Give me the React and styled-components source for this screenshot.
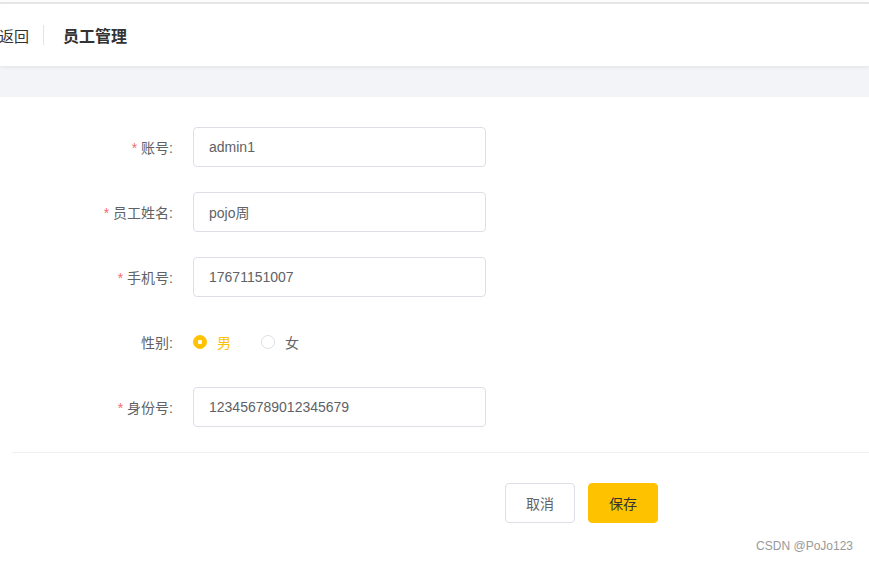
import styled, { createGlobalStyle } from "styled-components";

const GlobalStyle = createGlobalStyle`
  body {
    margin: 0;
    background: #fff;
    font-family: "Liberation Sans", "Noto Sans CJK SC", sans-serif;
  }
`;

export default function App() {
  const fields = [
    { label: "账号", value: "admin1", required: true },
    { label: "员工姓名", value: "pojo周", required: true },
    { label: "手机号", value: "17671151007", required: true },
    { label: "性别", type: "radio" },
    { label: "身份号", value: "123456789012345679", required: true },
  ];

  return (
    <Page>
      <GlobalStyle />
      <Header>
        <Back>返回</Back>
        <Divider />
        <Title>员工管理</Title>
      </Header>
      <Band />
      <FormArea>
        {fields.map((f) => (
          <Row key={f.label}>
            <Label>
              {f.required && <Star>*</Star>}
              {f.label}:
            </Label>
            {f.type === "radio" ? (
              <RadioGroup>
                <RadioItem $checked>
                  <RadioDot $checked />男
                </RadioItem>
                <RadioItem>
                  <RadioDot />女
                </RadioItem>
              </RadioGroup>
            ) : (
              <Input value={f.value} readOnly />
            )}
          </Row>
        ))}
        <Line />
        <Footer>
          <Button>取消</Button>
          <Button $primary>保存</Button>
        </Footer>
      </FormArea>
      <Watermark>CSDN @PoJo123</Watermark>
    </Page>
  );
}

const Page = styled.div`
  position: relative;
  width: 869px;
  height: 561px;
  padding-top: 2px;
  box-sizing: border-box;
  overflow: hidden;
`;

const Header = styled.header`
  display: flex;
  align-items: center;
  height: 62px;
  border-top: 2px solid #e6e6e6;
  box-shadow: 0 1px 4px rgba(0, 0, 0, 0.08);
  position: relative;
  z-index: 1;
`;

const Back = styled.span`
  font-size: 15px;
  color: #333;
  margin-left: -1px;
`;

const Divider = styled.span`
  width: 1px;
  height: 20px;
  background: #e4e4e4;
  margin: 0 19px 0 14px;
`;

const Title = styled.h1`
  margin: 0;
  font-size: 16px;
  font-weight: bold;
  color: #333;
`;

const Band = styled.div`
  height: 31px;
  background: #f3f4f7;
`;

const FormArea = styled.div`
  padding: 30px 0 0 12px;
`;

const Row = styled.div`
  display: flex;
  align-items: center;
  height: 40px;
  margin-bottom: 25px;

  &:last-of-type {
    margin-bottom: 0;
  }
`;

const Label = styled.label`
  width: 181px;
  padding-right: 20px;
  box-sizing: border-box;
  text-align: right;
  font-size: 14px;
  color: #606266;
  flex-shrink: 0;
`;

const Star = styled.span`
  color: #f56c6c;
  margin-right: 4px;
`;

const Input = styled.input`
  width: 293px;
  height: 40px;
  box-sizing: border-box;
  border: 1px solid #dcdfe6;
  border-radius: 4px;
  padding: 0 15px;
  font-size: 14px;
  font-family: inherit;
  color: #606266;
  outline: none;
`;

const RadioGroup = styled.div`
  display: flex;
  align-items: center;
  gap: 30px;
`;

const RadioItem = styled.span`
  display: flex;
  align-items: center;
  font-size: 14px;
  color: ${(p) => (p.$checked ? "#ffc200" : "#606266")};
`;

const RadioDot = styled.span`
  width: 14px;
  height: 14px;
  box-sizing: border-box;
  border-radius: 50%;
  margin-right: 10px;
  border: 1px solid ${(p) => (p.$checked ? "#ffc200" : "#dcdfe6")};
  background: ${(p) =>
    p.$checked ? "radial-gradient(circle, #fff 0 2px, #ffc200 2.5px)" : "#fff"};
`;

const Line = styled.div`
  height: 1px;
  background: #f0f0f0;
  margin-top: 25px;
`;

const Footer = styled.div`
  display: flex;
  gap: 13px;
  padding: 30px 0 0 493px;
`;

const Button = styled.button`
  width: 70px;
  height: 40px;
  border-radius: 4px;
  font-size: 14px;
  font-family: inherit;
  border: 1px solid ${(p) => (p.$primary ? "#ffc200" : "#dcdfe6")};
  background: ${(p) => (p.$primary ? "#ffc200" : "#fff")};
  color: ${(p) => (p.$primary ? "#333" : "#606266")};
`;

const Watermark = styled.span`
  position: absolute;
  right: 16px;
  bottom: 8px;
  font-size: 12px;
  color: #999;
`;
